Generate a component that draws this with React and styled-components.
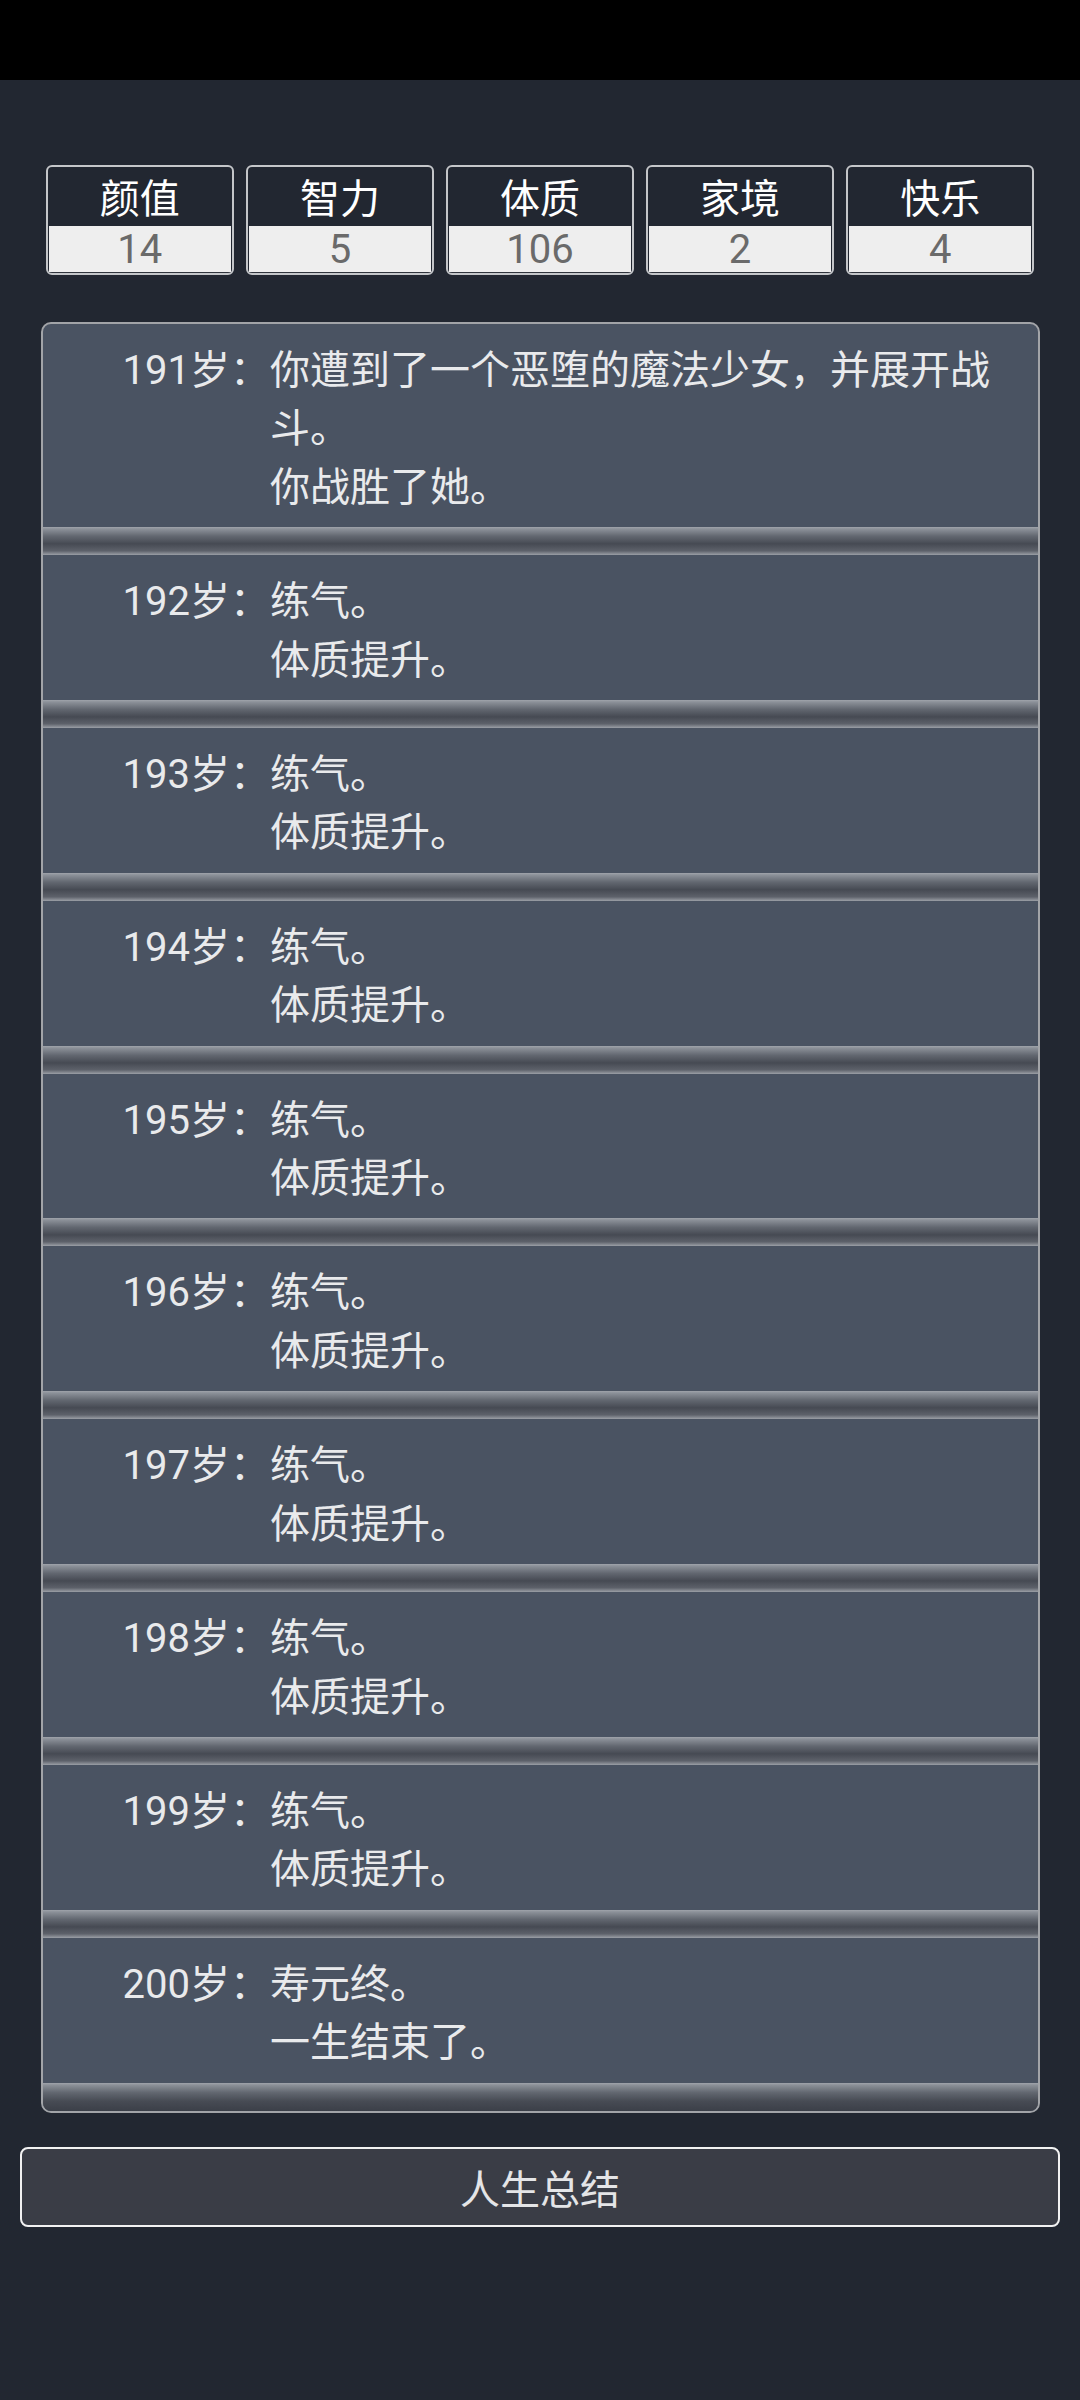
import React from 'react';
import styled, { createGlobalStyle } from 'styled-components';

const GlobalStyle = createGlobalStyle`
  html, body {
    margin: 0;
    padding: 0;
    background: #222731;
  }
  body {
    font-family: Roboto, "Noto Sans CJK SC", sans-serif;
    -webkit-font-smoothing: antialiased;
  }
  * {
    box-sizing: border-box;
  }
`;

const STATS = [
  { label: '颜值', value: 14 },
  { label: '智力', value: 5 },
  { label: '体质', value: 106 },
  { label: '家境', value: 2 },
  { label: '快乐', value: 4 },
];

const TRAINING = ['练气。', '体质提升。'];

const EVENTS = [
  { age: 191, lines: ['你遭到了一个恶堕的魔法少女，并展开战斗。', '你战胜了她。'] },
  { age: 192, lines: TRAINING },
  { age: 193, lines: TRAINING },
  { age: 194, lines: TRAINING },
  { age: 195, lines: TRAINING },
  { age: 196, lines: TRAINING },
  { age: 197, lines: TRAINING },
  { age: 198, lines: TRAINING },
  { age: 199, lines: TRAINING },
  { age: 200, lines: ['寿元终。', '一生结束了。'] },
];

const Page = styled.div`
  min-height: 2400px;
  background: #222731;
  display: flex;
  flex-direction: column;
`;

const StatusBar = styled.div`
  height: 80px;
  background: #000;
  flex-shrink: 0;
`;

const Content = styled.main`
  display: flex;
  flex-direction: column;
  padding: 85px 20px 0;
`;

const StatRow = styled.div`
  display: flex;
  gap: 12.5px;
  margin: 0 26px;
`;

const StatBox = styled.div`
  flex: 1 1 0;
  display: flex;
  flex-direction: column;
  height: 110px;
  border: 2px solid #c4c6c9;
  border-radius: 6px;
  overflow: hidden;
  background: #222731;
`;

const StatLabel = styled.div`
  height: 59px;
  padding-top: 7px;
  display: flex;
  align-items: center;
  justify-content: center;
  color: #ffffff;
  font-size: 40px;
  line-height: 1;
  white-space: nowrap;
`;

const StatValue = styled.div`
  flex: 1;
  display: flex;
  align-items: center;
  justify-content: center;
  padding-top: 2px;
  margin: 0 1px;
  background: #eeeeee;
  border-bottom: 1px solid #30343c;
  color: #6a6a6a;
  font-size: 40px;
  line-height: 1;
`;

const Card = styled.section`
  margin: 47px 20px 0 21px;
  border: 2px solid #a2a4a8;
  border-radius: 10px;
  overflow: hidden;
  background: #4a5362;
`;

const Entry = styled.div`
  display: flex;
  padding: 18px 20px 10px 0;
  color: #e9eaec;
  font-size: 40px;
  line-height: 58.4px;
`;

const Age = styled.div`
  flex: 0 0 227px;
  text-align: right;
  white-space: nowrap;
`;

const Lines = styled.div`
  flex: 1;
  min-width: 0;
`;

const Groove = styled.div`
  height: 28px;
  background: ${(p) =>
    p.$last
      ? 'linear-gradient(to bottom, #a0a4ab 0, #8a8f97 8%, #61666f 35%, #474b54 65%, #3b3f48 100%)'
      : 'linear-gradient(to bottom, #a0a4ab 0, #8c9199 7%, #626770 33%, #464a53 60%, #5d616a 85%, #9b9fa6 100%)'};
`;

const SummaryButton = styled.button`
  margin-top: 34px;
  height: 80px;
  width: 100%;
  border: 2px solid #f2f2f2;
  border-radius: 8px;
  background: #3a3d46;
  color: #e4e5e7;
  font-family: Roboto, "Noto Sans CJK SC", sans-serif;
  font-size: 40px;
  cursor: pointer;
`;

export default function App() {
  return (
    <Page>
      <GlobalStyle />
      <StatusBar />
      <Content>
        <StatRow>
          {STATS.map((s) => (
            <StatBox key={s.label}>
              <StatLabel>{s.label}</StatLabel>
              <StatValue>{s.value}</StatValue>
            </StatBox>
          ))}
        </StatRow>
        <Card>
          {EVENTS.map((e, i) => (
            <div key={e.age}>
              <Entry>
                <Age>{e.age}岁：</Age>
                <Lines>
                  {e.lines.map((line, j) => (
                    <div key={j}>{line}</div>
                  ))}
                </Lines>
              </Entry>
              <Groove $last={i === EVENTS.length - 1} />
            </div>
          ))}
        </Card>
        <SummaryButton type="button">人生总结</SummaryButton>
      </Content>
    </Page>
  );
}
